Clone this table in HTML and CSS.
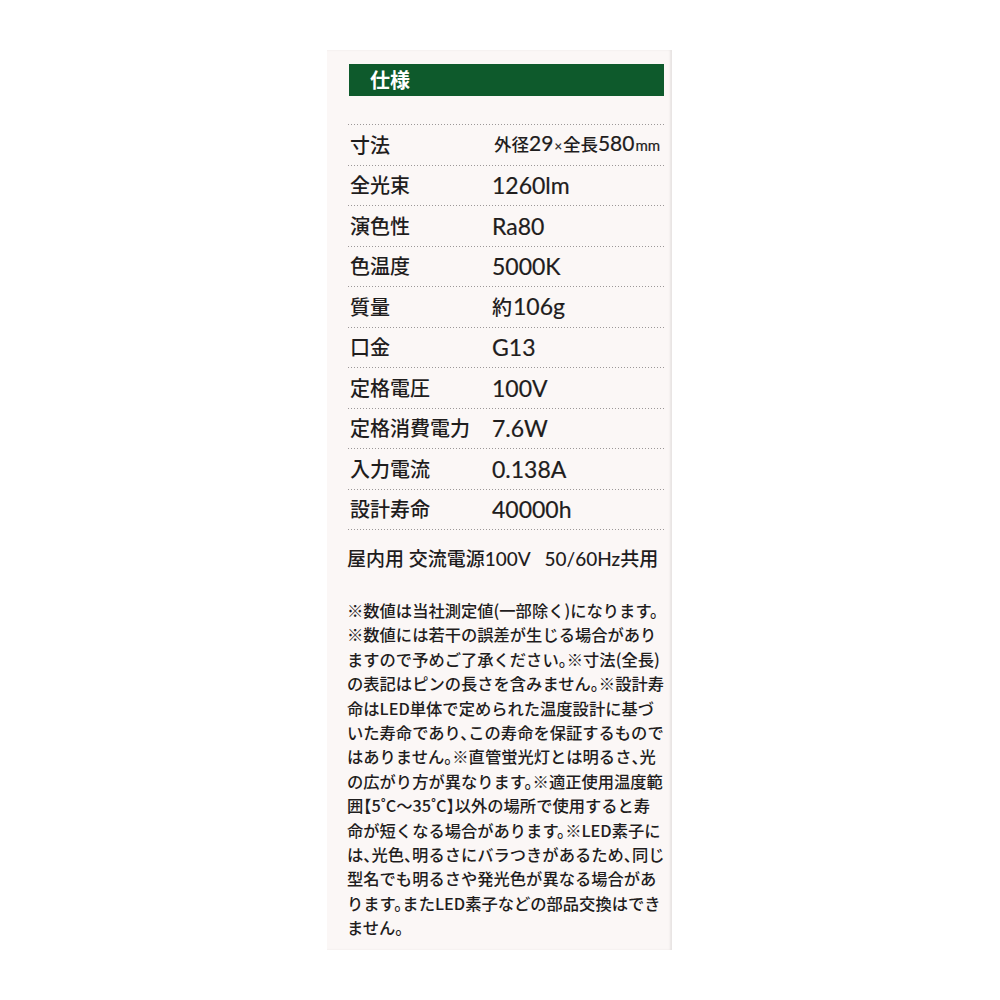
FILE: index.html
```html
<!DOCTYPE html>
<html lang="ja">
<head>
<meta charset="utf-8">
<title>仕様</title>
<link rel="stylesheet" href="styles.css">
</head>
<body>
<div class="card">
  <div class="head">仕様</div>
  <div class="specs">
    <div class="row"><span class="label">寸法</span><span class="value compact"><span class="jp">外径</span>29<span class="x">×</span><span class="jp">全長</span>580<small>mm</small></span></div>
    <div class="row"><span class="label">全光束</span><span class="value">1260lm</span></div>
    <div class="row"><span class="label">演色性</span><span class="value">Ra80</span></div>
    <div class="row"><span class="label">色温度</span><span class="value">5000K</span></div>
    <div class="row"><span class="label">質量</span><span class="value"><span class="jp">約</span>106g</span></div>
    <div class="row"><span class="label">口金</span><span class="value">G13</span></div>
    <div class="row"><span class="label">定格電圧</span><span class="value">100V</span></div>
    <div class="row"><span class="label">定格消費電力</span><span class="value">7.6W</span></div>
    <div class="row"><span class="label">入力電流</span><span class="value">0.138A</span></div>
    <div class="row"><span class="label">設計寿命</span><span class="value">40000h</span></div>
  </div>
  <p class="power">屋内用 交流電源100V&nbsp;&nbsp;&nbsp;50/60Hz共用</p>
  <p class="notes">※数値は当社測定値(一部除く)になります。<br>※数値には若干の誤差が生じる場合があり<br>ますので予めご了承ください。※寸法(全長)<br>の表記はピンの長さを含みません。※設計寿<br>命はLED単体で定められた温度設計に基づ<br>いた寿命であり、この寿命を保証するもので<br>はありません。※直管蛍光灯とは明るさ、光<br>の広がり方が異なります。※適正使用温度範<br>囲【5˚C〜35˚C】以外の場所で使用すると寿<br>命が短くなる場合があります。※LED素子に<br>は、光色、明るさにバラつきがあるため、同じ<br>型名でも明るさや発光色が異なる場合があ<br>ります。またLED素子などの部品交換はでき<br>ません。</p>
</div>
</body>
</html>
```
FILE: styles.css
```css
html, body {
  margin: 0;
  padding: 0;
  background: #ffffff;
}
body {
  font-family: "Noto Sans CJK JP", "Noto Sans", sans-serif;
  color: #1f1d1d;
}
.card {
  box-sizing: border-box;
  margin: 50px 0 0 327px;
  width: 345px;
  height: 900px;
  padding: 14px 8px 0 21px;
  background: #fbf7f6;
  box-shadow: inset -2px 0 2px rgba(0, 0, 0, 0.08);
}
.head {
  height: 32px;
  margin-left: 1px;
  background: #0e5a2c;
  color: #ffffff;
  font-weight: 700;
  font-size: 20px;
  line-height: 31px;
  padding-left: 21px;
}
.specs {
  margin-top: 28px;
  padding-top: 1px;
  background-image: linear-gradient(to right, #9c9898 1px, transparent 1px);
  background-size: 3px 1px;
  background-repeat: repeat-x;
  background-position: left top;
}
.row {
  display: grid;
  grid-template-columns: 144px 1fr;
  align-items: center;
  height: 40.5px;
  padding-bottom: 1px;
  box-sizing: border-box;
  white-space: nowrap;
  background-image: linear-gradient(to right, #9c9898 1px, transparent 1px);
  background-size: 3px 1px;
  background-repeat: repeat-x;
  background-position: left bottom;
}
.label {
  font-size: 20px;
  font-weight: 500;
  padding-left: 2px;
  line-height: 24px;
}
.value {
  font-family: Lato, "Noto Sans CJK JP", sans-serif;
  font-size: 23px;
  line-height: 26px;
  letter-spacing: 0;
  -webkit-text-stroke: 0.2px currentColor;
}
.value .jp {
  font-family: "Noto Sans CJK JP", sans-serif;
  font-size: 20px;
  font-weight: 500;
  -webkit-text-stroke: 0;
  padding-right: 1px;
}
.value.compact {
  font-size: 21px;
  padding-left: 2px;
}
.value.compact .jp {
  font-size: 17.5px;
  padding-right: 0;
}
.value .x {
  font-size: 13px;
  padding: 0 1px;
}
.value small {
  font-size: 15px;
  padding-left: 1px;
}
.power {
  margin: 17px 0 0 -1px;
  font-family: Lato, "Noto Sans CJK JP", sans-serif;
  font-size: 19px;
  font-weight: 500;
  line-height: 24px;
  white-space: nowrap;
}
.notes {
  margin: 27px 0 0 -1px;
  font-size: 16.3px;
  line-height: 24.4px;
  font-weight: 500;
  white-space: nowrap;
  font-feature-settings: "halt";
}
```
